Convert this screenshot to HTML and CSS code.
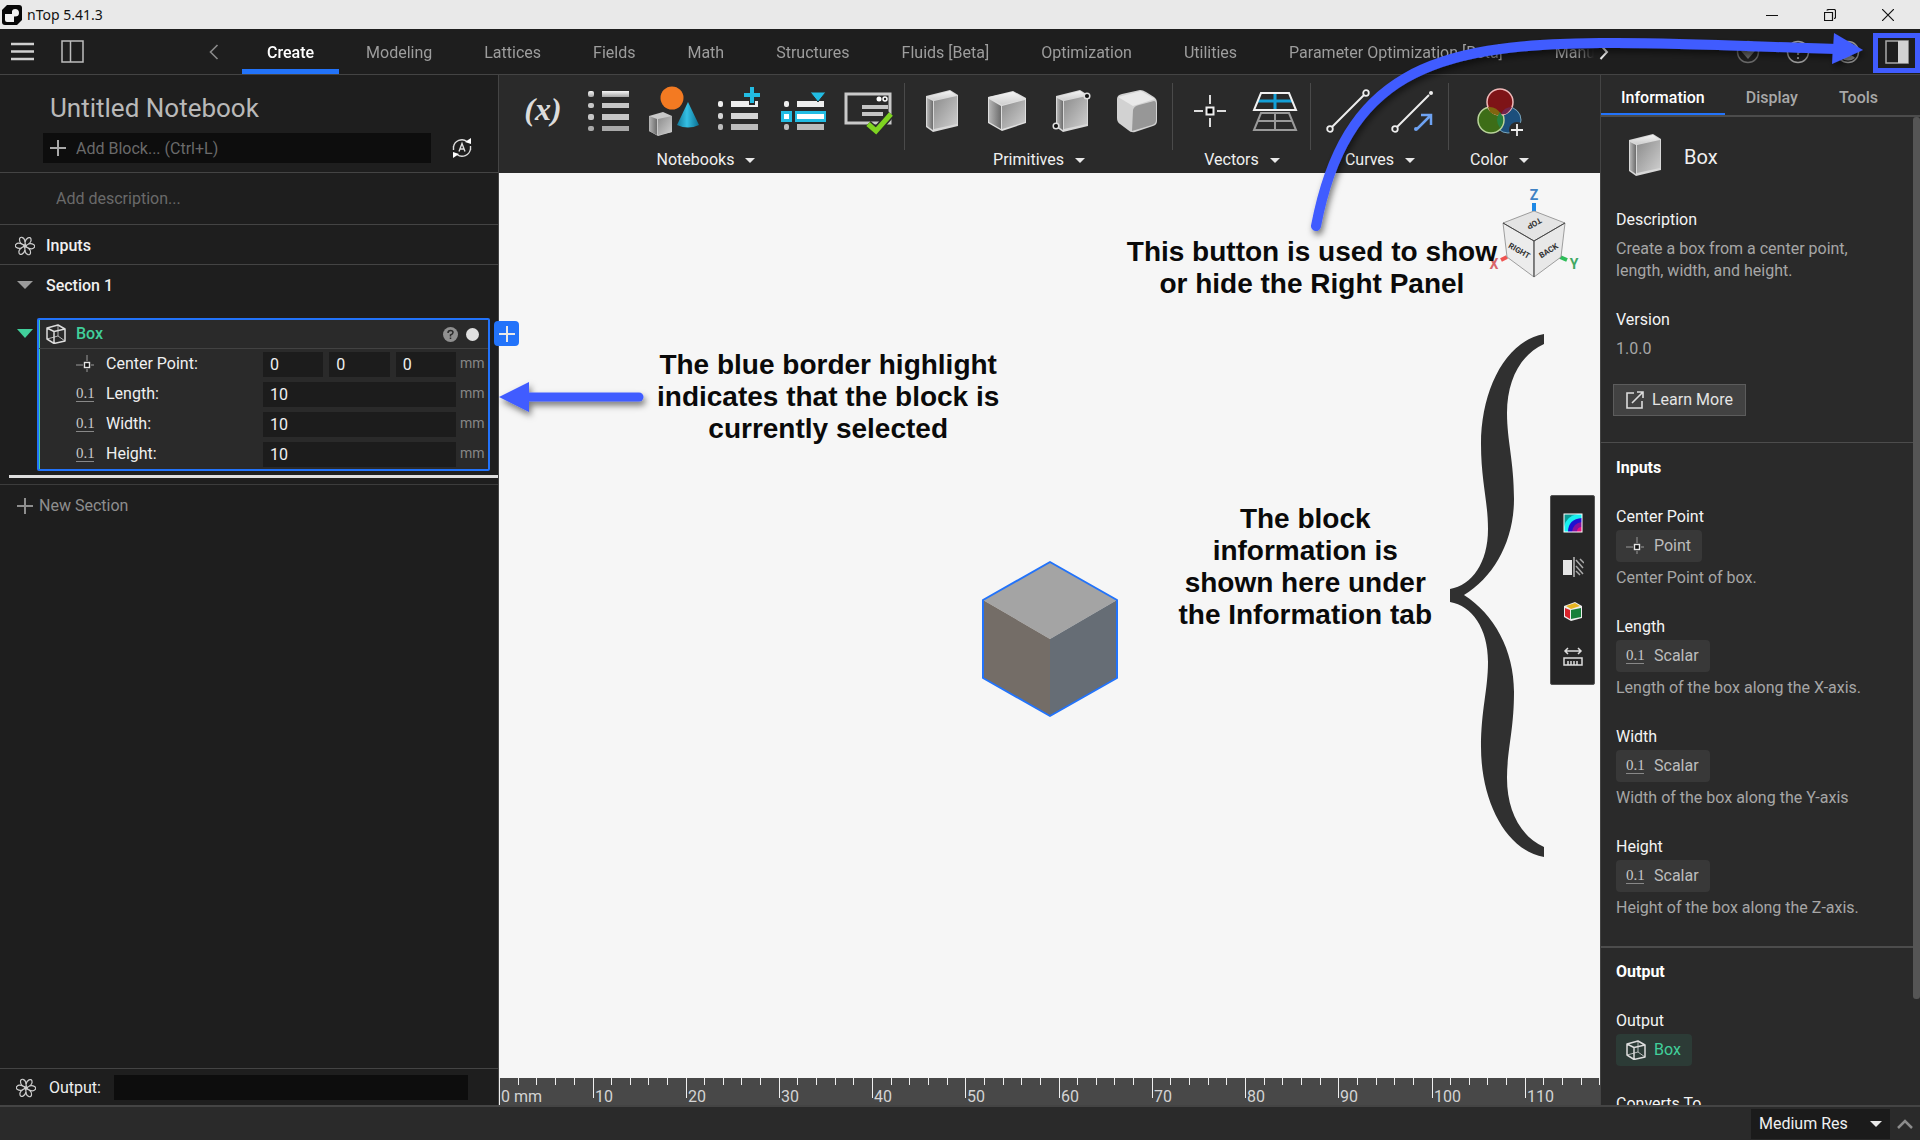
FILE: index.html
```html
<!DOCTYPE html>
<html lang="en">
<head>
<meta charset="utf-8">
<title>nTop 5.41.3</title>
<link rel="stylesheet" href="styles.css">
</head>
<body>
<svg class="defs" width="0" height="0" aria-hidden="true">
  <defs>
    <linearGradient id="gFront" x1="0" y1="0" x2="1" y2="1"><stop offset="0" stop-color="#8c8c8c"/><stop offset="1" stop-color="#cfcfcf"/></linearGradient>
    <linearGradient id="gSide" x1="0" y1="0" x2="1" y2="0"><stop offset="0" stop-color="#b5b5b5"/><stop offset="1" stop-color="#6c6c6c"/></linearGradient>
    <linearGradient id="gTop" x1="0" y1="0" x2="0" y2="1"><stop offset="0" stop-color="#f4f4f4"/><stop offset="1" stop-color="#cfcfcf"/></linearGradient>
    <linearGradient id="gFade" x1="0" y1="0" x2="0" y2="1"><stop offset="0" stop-color="#f6f6f6"/><stop offset="1" stop-color="#a4a4a4"/></linearGradient>
    <linearGradient id="gCone" x1="0" y1="0" x2="1" y2="0"><stop offset="0" stop-color="#12799a"/><stop offset=".45" stop-color="#35c0e4"/><stop offset="1" stop-color="#0b6f91"/></linearGradient>
    <filter id="shadow" x="-20%" y="-40%" width="140%" height="200%"><feDropShadow dx="2" dy="4" stdDeviation="3" flood-color="#000" flood-opacity=".5"/></filter>
    <symbol id="slab" viewBox="0 0 48 48">
      <path d="M8 9 L32 3 L40 8 V39 L15 45 L8 40 Z" fill="#d8d8d8"/>
      <path d="M9 10 L32 4 L39 9 L16 13 Z" fill="url(#gTop)"/>
      <path d="M9 11 L15 14 V43 L9 39 Z" fill="url(#gSide)"/>
      <path d="M16 14 L39 9 V37 L16 42 Z" fill="url(#gFront)"/>
    </symbol>
    <symbol id="wirebox" viewBox="0 0 20 20">
      <g fill="none" stroke="#dcdcdc" stroke-linejoin="round"><path d="M1 4 L12 1 L19 5 V17 L8 19.500 L1 15 Z M1 4 L8 7.500 L19 5 M8 7.500 V19.500" stroke-width="1.500"/><path d="M12 1 V12 L1 15 M12 12 L19 17" stroke-width=".8"/></g>
    </symbol>
    <symbol id="atom" viewBox="0 0 20 20">
      <g fill="none" stroke="#cfcfcf" stroke-width="1.200"><path id="petal" d="M10 6 C11 2 15 0 16 3 C17 6 13 9 8 11"/><use href="#petal" transform="rotate(60 10 10)"/><use href="#petal" transform="rotate(120 10 10)"/><use href="#petal" transform="rotate(180 10 10)"/><use href="#petal" transform="rotate(240 10 10)"/><use href="#petal" transform="rotate(300 10 10)"/></g>
    </symbol>
    <symbol id="plus" viewBox="0 0 16 16"><path d="M8 0 V16 M0 8 H16" stroke="currentColor" stroke-width="2"/></symbol>
    <symbol id="point" viewBox="0 0 18 18"><path d="M11 0 V6 M11 14 V17 M0 10 H7 M15 10 H18" stroke="#999" stroke-width="1"/><rect x="8.500" y="7.500" width="5" height="5" fill="#111" stroke="#e4e4e4" stroke-width="1.400"/></symbol>
  </defs>
</svg>

<header class="titlebar">
  <svg class="logo" width="20" height="20" viewBox="0 0 20 20"><path d="M5 0 H17 Q20 0 20 3 V15 L15 20 H3 Q0 20 0 17 V5 Z" fill="#080808"/><path d="M3 9 H10 V6 Q10.500 4 13 4 Q17 4 17 8 Q17 11.500 13 11.500 H12 V17 H5 Q3 17 3 15 Z" fill="#f2f2f2"/></svg>
  <span class="titlebar-name">nTop 5.41.3</span>
  <div class="window-buttons">
    <button aria-label="Minimize"><svg width="12" height="12"><path d="M0 6.500 H12" stroke="#111"/></svg></button>
    <button aria-label="Restore"><svg width="12" height="12"><path d="M.5 3.500 H8.500 V11.500 H.5 Z M3 1.500 Q3 .5 5 .5 H10 Q11.500 .5 11.500 2 V8 Q11.500 9.500 10 9.500" fill="none" stroke="#111" stroke-width="1.200"/></svg></button>
    <button aria-label="Close"><svg width="12" height="12"><path d="M0 0 L12 12 M12 0 L0 12" stroke="#111" stroke-width="1.200"/></svg></button>
  </div>
</header>

<div class="topbar">
  <div class="topbar-left">
    <button aria-label="Menu"><svg width="24" height="24"><path d="M0 4 H23 M0 11.500 H23 M0 19 H23" stroke="#d0d0d0" stroke-width="2.500"/></svg></button>
    <button aria-label="Toggle left panel"><svg width="24" height="24"><path d="M1 1 H22 V22 H1 Z M9.500 1 V22" fill="none" stroke="#bdbdbd" stroke-width="1.500"/></svg></button>
    <button class="scroll-left" aria-label="Scroll tabs left"><svg width="10" height="16"><path d="M8.500 1 L1.500 8 L8.500 15" fill="none" stroke="#8a8a8a" stroke-width="1.600"/></svg></button>
  </div>
  <nav class="tabs">
    <a href="#create" class="active">Create</a><a href="#modeling">Modeling</a><a href="#lattices">Lattices</a><a href="#fields">Fields</a><a href="#math">Math</a><a href="#structures">Structures</a><a href="#fluids">Fluids [Beta]</a><a href="#optimization">Optimization</a><a href="#utilities">Utilities</a><a href="#parameter">Parameter Optimization [Beta]</a><a href="#manufacturing">Manufacturing</a>
  </nav>
  <div class="topbar-right">
    <button class="scroll-right" aria-label="Scroll tabs right"><svg width="10" height="16"><path d="M1.500 1 L8 8 L1.500 15" fill="none" stroke="#e8e8e8" stroke-width="2"/></svg></button>
    <button aria-label="Downloads"><svg width="24" height="24"><circle cx="12" cy="12" r="10.500" fill="none" stroke="#686868" stroke-width="1.500"/><path d="M9 5 H15 V11 H19 L12 19 L5 11 H9 Z" fill="#686868"/></svg></button>
    <button aria-label="Help"><svg width="24" height="24"><circle cx="12" cy="12" r="10.500" fill="none" stroke="#9c9c9c" stroke-width="1.500"/><path d="M8.500 9.500 Q8.500 6 12 6 Q15.500 6 15.500 9 Q15.500 11 12 13 V15 M12 17 V19" fill="none" stroke="#9c9c9c" stroke-width="1.800"/></svg></button>
    <button aria-label="Account"><svg width="24" height="24"><circle cx="12" cy="12" r="10.500" fill="none" stroke="#9c9c9c" stroke-width="1.500"/><circle cx="12" cy="9" r="4" fill="#9c9c9c"/><path d="M5 18 Q7 15 12 15 Q17 15 19 18 Q12 23 5 18" fill="#9c9c9c"/></svg></button>
    <button class="panel-toggle" aria-label="Toggle right panel"><svg width="24" height="24"><rect x="1" y="1" width="22" height="22" fill="none" stroke="#aaa" stroke-width="1.500"/><rect x="13" y="1" width="10" height="22" fill="#d2d2d2"/></svg></button>
  </div>
</div>

<main class="workspace">
  <section class="notebook">
    <div class="notebook-head">
      <h1>Untitled Notebook</h1>
      <div class="add-row">
        <div class="add-block"><svg width="16" height="16"><use href="#plus"/></svg><input type="text" aria-label="Add block" placeholder="Add Block... (Ctrl+L)"></div>
        <button aria-label="Auto run"><svg width="20" height="20" viewBox="0 0 20 20"><path d="M1.500 9 A8.500 8.500 0 0 1 15 3.500 M18.500 11 A8.500 8.500 0 0 1 5 16.500 M1.500 8 V12 M18.500 8 V12" fill="none" stroke="#ddd" stroke-width="1.400"/><path d="M19 0 V6 L13 4 Z M1 20 V14 L7 16 Z" fill="#fff"/><path d="M7 13.500 L10 5.500 L13 13.500 M8 11 H12" fill="none" stroke="#ddd" stroke-width="1.400"/></svg></button>
      </div>
    </div>
    <div class="description-row"><input type="text" aria-label="Notebook description" placeholder="Add description..."></div>
    <div class="section-row inputs-row"><svg width="20" height="20"><use href="#atom"/></svg><span>Inputs</span></div>
    <div class="section-row"><svg width="20" height="20"><path d="M2 5 H18 L10 13 Z" fill="#9a9a9a"/></svg><span>Section 1</span></div>

    <div class="block-line">
      <svg class="block-caret" width="16" height="9"><path d="M0 0 H16 L8 9 Z" fill="#41cf9b"/></svg>
      <div class="block">
        <div class="block-head">
          <svg width="20" height="20"><use href="#wirebox"/></svg><span class="block-name">Box</span>
          <svg width="15" height="15" viewBox="0 0 15 15"><circle cx="7.500" cy="7.500" r="7.500" fill="#909090"/><path d="M5 6 Q5 3.500 7.500 3.500 Q10 3.500 10 5.500 Q10 7 7.500 8 V9.500 M7.500 10.500 V12" fill="none" stroke="#2a2a2a" stroke-width="1.500"/></svg>
          <svg width="13" height="13"><circle cx="6.500" cy="6.500" r="6.500" fill="#e0e0e0"/></svg>
        </div>
        <div class="param"><svg width="18" height="18"><use href="#point"/></svg><label for="cx">Center Point:</label><div class="values"><input id="cx" value="0"><input aria-label="Center point Y" value="0"><input aria-label="Center point Z" value="0"></div><span class="unit">mm</span></div>
        <div class="param"><span class="num">0.1</span><label for="len">Length:</label><div class="values"><input id="len" value="10"></div><span class="unit">mm</span></div>
        <div class="param"><span class="num">0.1</span><label for="wid">Width:</label><div class="values"><input id="wid" value="10"></div><span class="unit">mm</span></div>
        <div class="param"><span class="num">0.1</span><label for="hei">Height:</label><div class="values"><input id="hei" value="10"></div><span class="unit">mm</span></div>
      </div>
      <button class="block-add" aria-label="Add block"><svg width="16" height="16"><use href="#plus"/></svg></button>
    </div>
    <div class="drop-line"></div>
    <button class="new-section"><svg width="16" height="16"><use href="#plus"/></svg>New Section</button>
    <div class="output-row"><svg width="20" height="20"><use href="#atom"/></svg><label for="out">Output:</label><input id="out" type="text"></div>
  </section>

  <section class="center">
    <div class="ribbon">
      <div class="group">
        <div class="icons">
          <button aria-label="Variable"><svg width="48" height="48"><text x="23" y="33" text-anchor="middle" class="var-icon">(x)</text></svg></button>
          <button aria-label="List"><svg width="48" height="48"><g fill="url(#gFade)"><rect x="3" y="4" width="6" height="6" rx="2"/><rect x="17" y="4" width="27" height="6"/></g><g fill="#c6c6c6"><rect x="3" y="16" width="6" height="5" rx="2"/><rect x="17" y="16" width="27" height="5"/><rect x="3" y="27" width="6" height="6" rx="2"/><rect x="17" y="27" width="27" height="6"/></g><g fill="#a9a9a9"><rect x="3" y="39" width="6" height="5" rx="2"/><rect x="17" y="39" width="27" height="5"/></g></svg></button>
          <button aria-label="Custom block"><svg width="52" height="52"><circle cx="24" cy="13" r="11.500" fill="#f37a22"/><path d="M1 31 L15 27 L24 31 V47 L10 51 L1 46 Z" fill="#c9c9c9"/><path d="M1 31 L9 34 V50 L1 46 Z" fill="url(#gSide)"/><path d="M10 34 L24 31 V47 L10 50 Z" fill="url(#gFront)"/><path d="M40 17 L51 40 Q40 45 29 40 Z" fill="url(#gCone)"/></svg></button>
          <button aria-label="Add to list"><svg width="48" height="52"><g fill="#eee"><rect x="3" y="16" width="5" height="6" rx="2"/><rect x="16" y="16" width="27" height="6"/></g><g fill="#d5d5d5"><rect x="3" y="28" width="5" height="6" rx="2"/><rect x="16" y="28" width="27" height="6"/></g><g fill="#bcbcbc"><rect x="3" y="39" width="5" height="6" rx="2"/><rect x="16" y="39" width="27" height="6"/></g><path d="M37 1 V20 M28 10 H46" stroke="#2a2a2a" stroke-width="6"/><path d="M37 2 V18 M29 10 H45" stroke="#22bce3" stroke-width="4"/></svg></button>
          <button aria-label="List item"><svg width="48" height="52"><g fill="#eee"><rect x="4" y="16" width="5" height="6" rx="2"/><rect x="17" y="16" width="27" height="6"/></g><rect x="1" y="26" width="11" height="11" fill="#22bce3"/><rect x="15" y="26" width="31" height="11" fill="#22bce3"/><rect x="4" y="29" width="5" height="5" fill="#fff"/><rect x="17" y="29" width="27" height="5" fill="#fff"/><g fill="#bcbcbc"><rect x="4" y="39" width="5" height="6" rx="2"/><rect x="17" y="39" width="27" height="6"/></g><path d="M30 7 H46 L38 17 Z" fill="#22bce3" stroke="#2a2a2a"/></svg></button>
          <button aria-label="Validate"><svg width="52" height="48"><rect x="3" y="7" width="44" height="29" fill="none" stroke="#c9c9c9" stroke-width="3"/><circle cx="36" cy="12" r="2.500" fill="#fff"/><circle cx="42" cy="12" r="2" fill="none" stroke="#fff" stroke-width="1.500"/><path d="M19 20 H45 M19 27 H40" stroke="#c4c4c4" stroke-width="4"/><path d="M25 37 L33 44 L48 27" fill="none" stroke="#2a2a2a" stroke-width="8"/><path d="M25 37 L33 44 L48 27" fill="none" stroke="#7ed321" stroke-width="5"/></svg></button>
        </div>
        <button class="group-label">Notebooks<i class="caret"></i></button>
      </div>
      <div class="sep"></div>
      <div class="group">
        <div class="icons">
          <button aria-label="Box"><svg width="48" height="48"><use href="#slab"/></svg></button>
          <button aria-label="Cube"><svg width="48" height="48"><path d="M5 10 L30 4 L43 11 V36 L19 44 L5 36 Z" fill="#dedede"/><path d="M6 10 L30 5 L42 12 L19 18 Z" fill="url(#gTop)"/><path d="M6 12 L18 19 V42 L6 35 Z" fill="url(#gSide)"/><path d="M19 19 L42 13 V35 L19 42 Z" fill="url(#gFront)"/></svg></button>
          <button aria-label="Box from corners"><svg width="48" height="48"><use href="#slab"/><g fill="#111" stroke="#e0e0e0" stroke-width="1.500"><circle cx="39" cy="9" r="2.800"/><circle cx="8" cy="39" r="2.800"/></g></svg></button>
          <button aria-label="Rounded box"><svg width="48" height="48"><path d="M4 12 Q4 8 9 7 L27 3 Q30 3 33 5 L41 10 Q44 12 44 16 V34 Q44 38 40 39 L22 45 Q18 46 15 43 L7 37 Q4 35 4 31 Z" fill="#d2d2d2"/><path d="M20 23 Q21 19 26 18 L41 14 Q43 14 43 17 V33 Q43 37 39 38 L19 44 Z" fill="#979797"/><path d="M5 10 L28 4 L42 12 L20 19 Z" fill="#e9e9e9"/></svg></button>
        </div>
        <button class="group-label">Primitives<i class="caret"></i></button>
      </div>
      <div class="sep"></div>
      <div class="group">
        <div class="icons">
          <button aria-label="Point"><svg width="48" height="48"><path d="M24 8 V17 M24 31 V40 M8 24 H17 M31 24 H40" stroke="#ddd" stroke-width="2"/><rect x="20.500" y="20.500" width="7" height="7" fill="#000" stroke="#eee" stroke-width="2"/></svg></button>
          <button aria-label="Plane"><svg width="48" height="48"><path d="M10 26 H38 L45 43 H3 Z M24 26 V43 M7 34 H41" fill="none" stroke="#9a9a9a" stroke-width="2"/><path d="M24 5 V22 M7 14 H41" stroke="#149fd6" stroke-width="3"/><path d="M10 6 H38 L45 23 H3 Z" fill="none" stroke="#f2f2f2" stroke-width="2"/></svg></button>
        </div>
        <button class="group-label">Vectors<i class="caret"></i></button>
      </div>
      <div class="sep"></div>
      <div class="group">
        <div class="icons">
          <button aria-label="Line"><svg width="48" height="48"><path d="M8 40 L40 8" stroke="#eee" stroke-width="2"/><g fill="#2a2a2a" stroke="#eee" stroke-width="1.800"><circle cx="6" cy="42" r="2.800"/><circle cx="42" cy="6" r="2.800"/></g></svg></button>
          <button aria-label="Vector line"><svg width="48" height="48"><path d="M8 40 L40 8" stroke="#eee" stroke-width="2"/><circle cx="6" cy="42" r="2.800" fill="#2a2a2a" stroke="#eee" stroke-width="1.800"/><circle cx="42" cy="6" r="2" fill="#eee"/><path d="M28 42 L41 29 M32 28 H42 V38" fill="none" stroke="#6ea2f2" stroke-width="2.500"/><circle cx="27" cy="42" r="2" fill="#6ea2f2"/></svg></button>
        </div>
        <button class="group-label">Curves<i class="caret"></i></button>
      </div>
      <div class="sep"></div>
      <div class="group color-group">
        <div class="icons">
          <button aria-label="Color"><svg width="48" height="50"><circle cx="32" cy="34" r="13" fill="#1c4f7c" stroke="#78a6bd"/><circle cx="15" cy="34" r="13" fill="#3d6d17" stroke="#b9d39b" stroke-width="1.500"/><circle cx="24" cy="16" r="13" fill="#7e1417" stroke="#f1b9b9" stroke-width="1.500"/><path d="M12 21 Q20 20 25 28 Q20 31 14 26 Z" fill="#80650f"/><path d="M36 21 Q28 21 25 28 Q31 30 36 21 Z" fill="#70244b"/><path d="M24 26 Q30 34 24 42 Q18 34 24 26" fill="#26803f"/><circle cx="41" cy="44" r="8" fill="#2a2a2a"/><path d="M41 38 V50 M35 44 H47" stroke="#eee" stroke-width="1.800"/></svg></button>
        </div>
        <button class="group-label">Color<i class="caret"></i></button>
      </div>
    </div>

    <div class="viewport">
      <svg class="model" width="138" height="158" viewBox="0 0 138 158"><path d="M69 2 L136 40 L69 79 L2 40 Z" fill="#a4a4a4"/><path d="M2 40 L69 79 V156 L2 118 Z" fill="#746d67"/><path d="M136 40 L69 79 V156 L136 118 Z" fill="#666d75"/><path d="M69 2 L136 40 V118 L69 156 L2 118 V40 Z" fill="none" stroke="#2273fa" stroke-width="2" stroke-linejoin="round"/></svg>

      <svg class="gizmo" width="120" height="110" viewBox="0 0 120 110">
        <path d="M54 31 V23" stroke="#1e88e5" stroke-width="4"/><path d="M27 77 L21 80" stroke="#ef5350" stroke-width="4"/><path d="M80 77 L87 80" stroke="#2ebd59" stroke-width="4"/>
        <path d="M54 31 L85 43 L54 61 L23 43 Z" fill="#e4e4e4" stroke="#888" stroke-width=".8"/><path d="M23 43 L54 61 V97 L27 77 Z" fill="#ececec" stroke="#888" stroke-width=".8"/><path d="M85 43 L54 61 V97 L81 77 Z" fill="#e8e8e8" stroke="#888" stroke-width=".8"/><path d="M23 43 L54 61 L85 43 M54 61 V97" fill="none" stroke="#444"/>
        <text x="54" y="20" class="axis z">Z</text><text x="14" y="89" class="axis x">X</text><text x="94" y="89" class="axis y">Y</text>
        <text class="face" transform="translate(53 41) rotate(152)">TOP</text><text class="face" transform="translate(38 73) rotate(30)">RIGHT</text><text class="face" transform="translate(70 73) rotate(-32)">BACK</text>
      </svg>

      <div class="side-tools">
        <button aria-label="Field view"><svg width="20" height="20"><rect x="1" y="1" width="18" height="18" fill="#0a9a94"/><path d="M1 19 V14 Q3 3 15 1 H19 V19 Z" fill="#17f0f0"/><path d="M5 19 Q5 6 19 5 V19 Z" fill="#2010d0"/><path d="M9 19 Q10 10 19 9 V19 Z" fill="#86109c"/><path d="M14 19 Q14 14 19 14 V19 Z" fill="#e8107c"/><rect x="1" y="1" width="18" height="18" fill="none" stroke="#fff"/></svg></button>
        <button aria-label="Section view"><svg width="22" height="20"><rect x="1" y="3" width="9" height="15" fill="#e5e5e5"/><path d="M12 0 V20" stroke="#bbb" stroke-width="1.500"/><path d="M14 3 L21 11 M18 2 L22 6 M14 9 L21 17 M14 14 L18 18" stroke="#aaa" stroke-width="1.500"/></svg></button>
        <button aria-label="View cube"><svg width="20" height="22"><path d="M1 5 L12 1 L19 5 V17 L8 20 L1 16 Z" fill="#eee"/><path d="M3 5 L12 2 L17 5 L8 8 Z" fill="#e6b422"/><path d="M2 7 L7 9 V18 L2 15 Z" fill="#d8242c"/><path d="M8 9 L18 7 V16 L8 18 Z" fill="#17803a"/></svg></button>
        <button aria-label="Measure"><svg width="20" height="20"><path d="M2 4 H18 M5 1 L2 4 L5 7 M15 1 L18 4 L15 7" fill="none" stroke="#ddd" stroke-width="1.500"/><path d="M1 11 H19 V18 H1 Z M5 14 V18 M8 14 V18 M11 14 V18 M14 14 V18" fill="none" stroke="#ddd" stroke-width="1.500"/></svg></button>
      </div>

      <p class="note note-toggle">This button is used to show<br>or hide the Right Panel</p>
      <p class="note note-border">The blue border highlight<br>indicates that the block is<br>currently selected</p>
      <p class="note note-info">The block<br>information is<br>shown here under<br>the Information tab</p>
      <svg class="arrow-left" width="160" height="50"><g filter="url(#shadow)"><path d="M26 20 H140" stroke="#405cff" stroke-width="9" stroke-linecap="round"/><path d="M0 20 L30 5 V35 Z" fill="#405cff"/></g></svg>
      <svg class="brace" width="94" height="523" viewBox="0 0 94 523"><path d="M0 268 C22 272 38 294 38 328 C38 356 31 376 31 413 C31 466 55 516 94 523 V513 C70 502 57 476 57 444 C57 416 64 396 64 358 C64 316 44 280 14 261 C44 243 64 207 64 165 C64 127 57 107 57 79 C57 47 70 21 94 10 V0 C55 7 31 57 31 110 C31 147 38 167 38 195 C38 229 22 251 0 255 Z" fill="#303030"/></svg>

      <svg class="ruler" height="27">
        <path d="M19 0 V7 M37 0 V7 M56 0 V7 M75 0 V7 M112 0 V7 M131 0 V7 M149 0 V7 M168 0 V7 M205 0 V7 M224 0 V7 M242 0 V7 M261 0 V7 M298 0 V7 M317 0 V7 M336 0 V7 M354 0 V7 M392 0 V7 M410 0 V7 M429 0 V7 M448 0 V7 M485 0 V7 M504 0 V7 M522 0 V7 M541 0 V7 M578 0 V7 M597 0 V7 M615 0 V7 M634 0 V7 M671 0 V7 M690 0 V7 M709 0 V7 M727 0 V7 M765 0 V7 M783 0 V7 M802 0 V7 M821 0 V7 M858 0 V7 M877 0 V7 M895 0 V7 M914 0 V7 M951 0 V7 M970 0 V7 M988 0 V7 M1007 0 V7 M1044 0 V7 M1063 0 V7 M1082 0 V7 M1100 0 V7 M0 0 V27 M94 0 V20 M187 0 V20 M280 0 V20 M373 0 V20 M466 0 V20 M560 0 V20 M653 0 V20 M746 0 V20 M839 0 V20 M933 0 V20 M1026 0 V20" transform="translate(.5)" stroke="#f0f0f0"/>
        <text x="2" y="24">0 mm</text><text x="96" y="24">10</text><text x="189" y="24">20</text><text x="282" y="24">30</text><text x="375" y="24">40</text><text x="468" y="24">50</text><text x="562" y="24">60</text><text x="655" y="24">70</text><text x="748" y="24">80</text><text x="841" y="24">90</text><text x="935" y="24">100</text><text x="1028" y="24">110</text>
      </svg>
    </div>
  </section>

  <aside class="info">
    <nav class="info-tabs"><a href="#information" class="active">Information</a><a href="#display">Display</a><a href="#tools">Tools</a></nav>
    <div class="info-body">
      <div class="info-content">
        <section>
          <div class="info-title"><svg width="48" height="48"><use href="#slab"/></svg><h2>Box</h2></div>
          <h3>Description</h3>
          <p class="about">Create a box from a center point, length, width, and height.</p>
          <h3>Version</h3>
          <p class="about">1.0.0</p>
          <button class="learn"><svg width="18" height="18"><path d="M8 2 H1 V17 H16 V10" fill="none" stroke="#ddd" stroke-width="1.600"/><path d="M6 12 L17 1 M11 1 H17 V7" fill="none" stroke="#ddd" stroke-width="1.600"/></svg>Learn More</button>
        </section>
        <section>
          <h4>Inputs</h4>
          <div class="item"><h3>Center Point</h3><span class="chip"><svg width="18" height="18"><use href="#point"/></svg>Point</span><p>Center Point of box.</p></div>
          <div class="item"><h3>Length</h3><span class="chip"><span class="num">0.1</span>Scalar</span><p>Length of the box along the X-axis.</p></div>
          <div class="item"><h3>Width</h3><span class="chip"><span class="num">0.1</span>Scalar</span><p>Width of the box along the Y-axis</p></div>
          <div class="item"><h3>Height</h3><span class="chip"><span class="num">0.1</span>Scalar</span><p>Height of the box along the Z-axis.</p></div>
        </section>
        <section class="output">
          <h4>Output</h4>
          <div class="item"><h3>Output</h3><span class="chip chip-box"><svg width="20" height="20"><use href="#wirebox"/></svg>Box</span></div>
          <h3>Converts To</h3>
        </section>
      </div>
      <div class="scrollbar"></div>
    </div>
  </aside>
</main>

<footer class="status">
  <div class="res"><select aria-label="Resolution"><option>Medium Res</option></select><i class="caret"></i></div>
  <button aria-label="Expand"><svg width="16" height="10"><path d="M1 9 L8 2 L15 9" fill="none" stroke="#8c8c8c" stroke-width="2.500"/></svg></button>
</footer>

<div class="toggle-frame"></div>
<svg class="arrow-toggle" width="620" height="250" viewBox="1300 0 620 250"><g filter="url(#shadow)"><path d="M1316 226 C1345 75 1430 44 1600 43 C1680 42 1760 47 1836 49" fill="none" stroke="#405cff" stroke-width="10" stroke-linecap="round"/><path d="M1834 33 L1863 50 L1832 64 Z" fill="#405cff"/></g></svg>
</body>
</html>
```
FILE: styles.css
```css
* { box-sizing: border-box; }
body {
  margin: 0;
  height: 100vh;
  display: flex;
  flex-direction: column;
  overflow: hidden;
  position: relative;
  background: #1e1e1e;
  color: #f0f0f0;
  font: 16px/22px Roboto, "Liberation Sans", sans-serif;
}
h1, h2, h3, h4, p { margin: 0; font-weight: 400; font-size: 16px; }
a { color: inherit; text-decoration: none; }
button { display: flex; align-items: center; padding: 0; border: 0; background: none; color: inherit; font: inherit; }
input, select { font: inherit; color: inherit; border: 0; border-radius: 0; outline: 0; min-width: 0; background: none; }
svg { display: block; flex: none; }
.defs { position: absolute; }

.caret { width: 0; height: 0; border: 5px solid transparent; border-top-color: #e8e8e8; border-bottom: 0; }
.num { width: 18px; height: 16px; border-bottom: 1px solid #888; color: #c8c8c8; font: 15px/14px "Liberation Serif", serif; text-align: center; flex: none; }

/* Window title */
.titlebar { height: 29px; flex: none; display: flex; align-items: center; gap: 5px; padding-left: 2px; background: #e9e9e9; color: #111; }
.titlebar-name { font: 14px/20px "Noto Sans", sans-serif; }
.window-buttons { margin-left: auto; display: flex; gap: 46px; padding-right: 26px; }

/* Top bar */
.topbar { height: 46px; flex: none; display: flex; border-bottom: 1px solid #444; }
.topbar-left { width: 242px; flex: none; display: flex; align-items: center; gap: 26px; padding: 0 23px 0 11px; }
.scroll-left { margin-left: auto; }
.tabs { flex: 1; min-width: 0; display: flex; gap: 2px; overflow: hidden; color: #9d9d9d; -webkit-mask-image: linear-gradient(to left, transparent, #000 16px); mask-image: linear-gradient(to left, transparent, #000 16px); }
.tabs a { flex: none; padding: 13px 25px 0; white-space: nowrap; }
.tabs .active { color: #fff; font-weight: 500; border-bottom: 5px solid #2273fa; }
.topbar-right { width: 326px; flex: none; display: flex; align-items: center; gap: 26px; padding-left: 5px; }
.scroll-right { margin-right: auto; }
.panel-toggle { width: 47px; margin-left: -13px; justify-content: center; }

.workspace { flex: 1; min-height: 0; display: flex; }

/* Notebook panel */
.notebook { width: 499px; flex: none; display: flex; flex-direction: column; border-right: 1px solid #444; }
.notebook-head { padding: 17px 0 9px 43px; border-bottom: 1px solid #444; }
.notebook-head h1 { padding-left: 7px; font-size: 26px; line-height: 32px; color: #b9b9b9; }
.add-row { display: flex; align-items: center; gap: 21px; margin-top: 9px; }
.add-block { width: 388px; height: 30px; display: flex; align-items: center; gap: 8px; padding-left: 7px; background: #0d0d0d; color: #a8a8a8; }
.add-block input { flex: 1; padding-top: 3px; }
::placeholder { color: #6a6a6a; opacity: 1; }
.description-row { height: 52px; padding: 14px 0 0 54px; border-bottom: 1px solid #444; }
.section-row { height: 40px; display: flex; align-items: center; gap: 11px; padding: 2px 0 0 15px; font-weight: 500; }
.inputs-row { border-bottom: 1px solid #444; }
.block-line { display: flex; align-items: flex-start; padding: 13px 0 0 17px; position: relative; }
.block-caret { margin: 11px 4px 0 0; }
.block { width: 453px; background: #2a2a2a; border: 2px solid #2273fa; border-radius: 2px; box-shadow: inset 1px 0 #41cf9b; }
.block-head { height: 29px; display: flex; align-items: center; gap: 8px; padding: 0 9px 0 7px; border-bottom: 1px solid #424242; }
.block-name { flex: 1; padding-left: 2px; color: #41cf9b; font-weight: 500; }
.param { height: 30px; display: grid; grid-template-columns: 18px 169px 193px 32px; align-items: center; padding-left: 37px; }
.param label { padding-left: 12px; }
.values { display: flex; gap: 6px; }
.values input { flex: 1; width: 0; height: 25px; padding: 0 7px; background: #1c1c1c; }
.unit { padding: 0 0 2px 4px; font-size: 14px; line-height: 20px; color: #868686; }
.block-add { position: absolute; left: 494px; top: 16px; width: 25px; height: 25px; justify-content: center; border-radius: 4px; background: #2273fa; color: #e8e8e8; z-index: 2; }
.drop-line { height: 3px; flex: none; margin: 4px 0 6px 9px; background: #dedede; }
.new-section { gap: 6px; padding: 10px 0 0 17px; border-top: 1px solid #3c3c3c; color: #8e8e8e; }
.output-row { margin-top: auto; height: 37px; flex: none; display: flex; align-items: center; padding: 1px 30px 0 16px; border-top: 1px solid #444; }
.output-row label { width: 78px; padding-left: 13px; }
.output-row input { flex: 1; height: 25px; background: #0d0d0d; }

/* Ribbon */
.center { flex: 1; min-width: 0; display: flex; flex-direction: column; }
.ribbon { height: 98px; flex: none; display: flex; padding-left: 8px; background: #2a2a2a; overflow: hidden; }
.group { flex: none; padding: 8px 3px 0 4px; }
.color-group { width: 100px; }
.icons { display: flex; justify-content: center; height: 56px; }
.icons button { width: 65px; justify-content: center; }
.group-label { margin: 10px auto 0; gap: 11px; }
.sep { width: 1px; height: 67px; flex: none; margin-top: 8px; background: #4a4a4a; }
.var-icon { font: italic 700 32px "Liberation Serif", serif; fill: #dcdcdc; }

/* Viewport */
.viewport { flex: 1; min-height: 0; position: relative; background: #f6f6f6; }
.model { position: absolute; left: 50%; top: 50%; margin: -79px 0 0 -69px; }
.gizmo { position: absolute; right: 0; top: 7px; }
.axis { font: 700 14px Roboto, sans-serif; text-anchor: middle; }
.axis.z { fill: #3f82c4; }
.axis.x { fill: #d9646a; }
.axis.y { fill: #3fa862; }
.face { font: 700 8px Roboto, sans-serif; text-anchor: middle; fill: #333; }
.side-tools { position: absolute; right: 5px; top: 322px; width: 45px; height: 190px; display: flex; flex-direction: column; justify-content: space-around; align-items: center; padding: 5px 0; background: #262626; border: 1px solid #555; border-radius: 2px; }
.note { position: absolute; font: 700 28px/32px "Liberation Sans", Arial, sans-serif; color: #0a0a0a; text-align: center; white-space: nowrap; }
.note-toggle { right: 103px; top: 63px; }
.note-border { left: 158px; top: 176px; }
.note-info { right: 168px; top: 330px; }
.arrow-left { position: absolute; left: 0; top: 204px; overflow: visible; }
.brace { position: absolute; right: 56px; top: 161px; }
.ruler { position: absolute; left: 0; bottom: 0; width: 100%; background: #484848; }
.ruler text { font: 16px Roboto, sans-serif; fill: #d4d4d4; }

/* Information panel */
.info { width: 320px; flex: none; display: flex; flex-direction: column; background: #2a2a2a; border-left: 1px solid #444; }
.info-tabs { height: 42px; flex: none; display: flex; gap: 1px; border-bottom: 2px solid #4c4c4c; color: #a8a8a8; font-weight: 500; }
.info-tabs a { padding: 12px 20px 0; }
.info-tabs .active { color: #fff; border-bottom: 2px solid #2273fa; }
.info-body { flex: 1; min-height: 0; display: flex; overflow: hidden; }
.info-content { flex: 1; min-width: 0; }
.scrollbar { width: 7px; height: 882px; background: #555; border-radius: 3px; }
.info-content section { padding: 14px 14px 0 15px; border-bottom: 1px solid #4c4c4c; }
.info-content section:first-child { padding-bottom: 26px; }
.info-title { display: flex; align-items: center; gap: 15px; padding-left: 5px; margin-bottom: 30px; }
.info-title h2 { padding-top: 4px; font-size: 20px; line-height: 24px; }
.info h3 { color: #f4f4f4; }
.info p { color: #a6a6a6; }
.info .about { margin: 7px 0 27px; }
.info .about + .learn { margin-top: -3px; }
.learn { height: 32px; gap: 8px; margin-left: -3px; padding: 0 12px; background: #424242; border: 1px solid #5c5c5c; color: #e4e4e4; }
.info h4 { font-weight: 700; color: #fff; margin-bottom: 27px; }
.item { margin-bottom: 27px; }
.chip { width: fit-content; height: 32px; display: flex; align-items: center; gap: 10px; margin: 2px 0 5px; padding: 0 11px 0 10px; border-radius: 4px; background: #383838; color: #bdbdbd; }
.chip-box { background: #2c3b36; color: #41cf9b; gap: 8px; }
.info-content .output { padding-top: 13px; border-top: 1px solid #4c4c4c; border-bottom: 0; }

/* Status bar */
.status { height: 35px; flex: none; display: flex; justify-content: flex-end; align-items: center; gap: 7px; padding-right: 7px; background: #2a2a2a; border-top: 2px solid #444; z-index: 1; }
.res { display: grid; align-items: center; width: 139px; height: 30px; background: #1b1b1b; }
.res select { grid-area: 1 / 1; appearance: none; width: 100%; height: 30px; padding: 0 8px; }
.res .caret { grid-area: 1 / 1; justify-self: end; margin-right: 8px; border-width: 6px 6px 0; pointer-events: none; }

/* Callouts over the interface */
.toggle-frame { position: absolute; right: 0; top: 33px; width: 47px; height: 40px; border: 5px solid #405cff; pointer-events: none; }
.arrow-toggle { position: absolute; right: 0; top: 0; pointer-events: none; }
```
